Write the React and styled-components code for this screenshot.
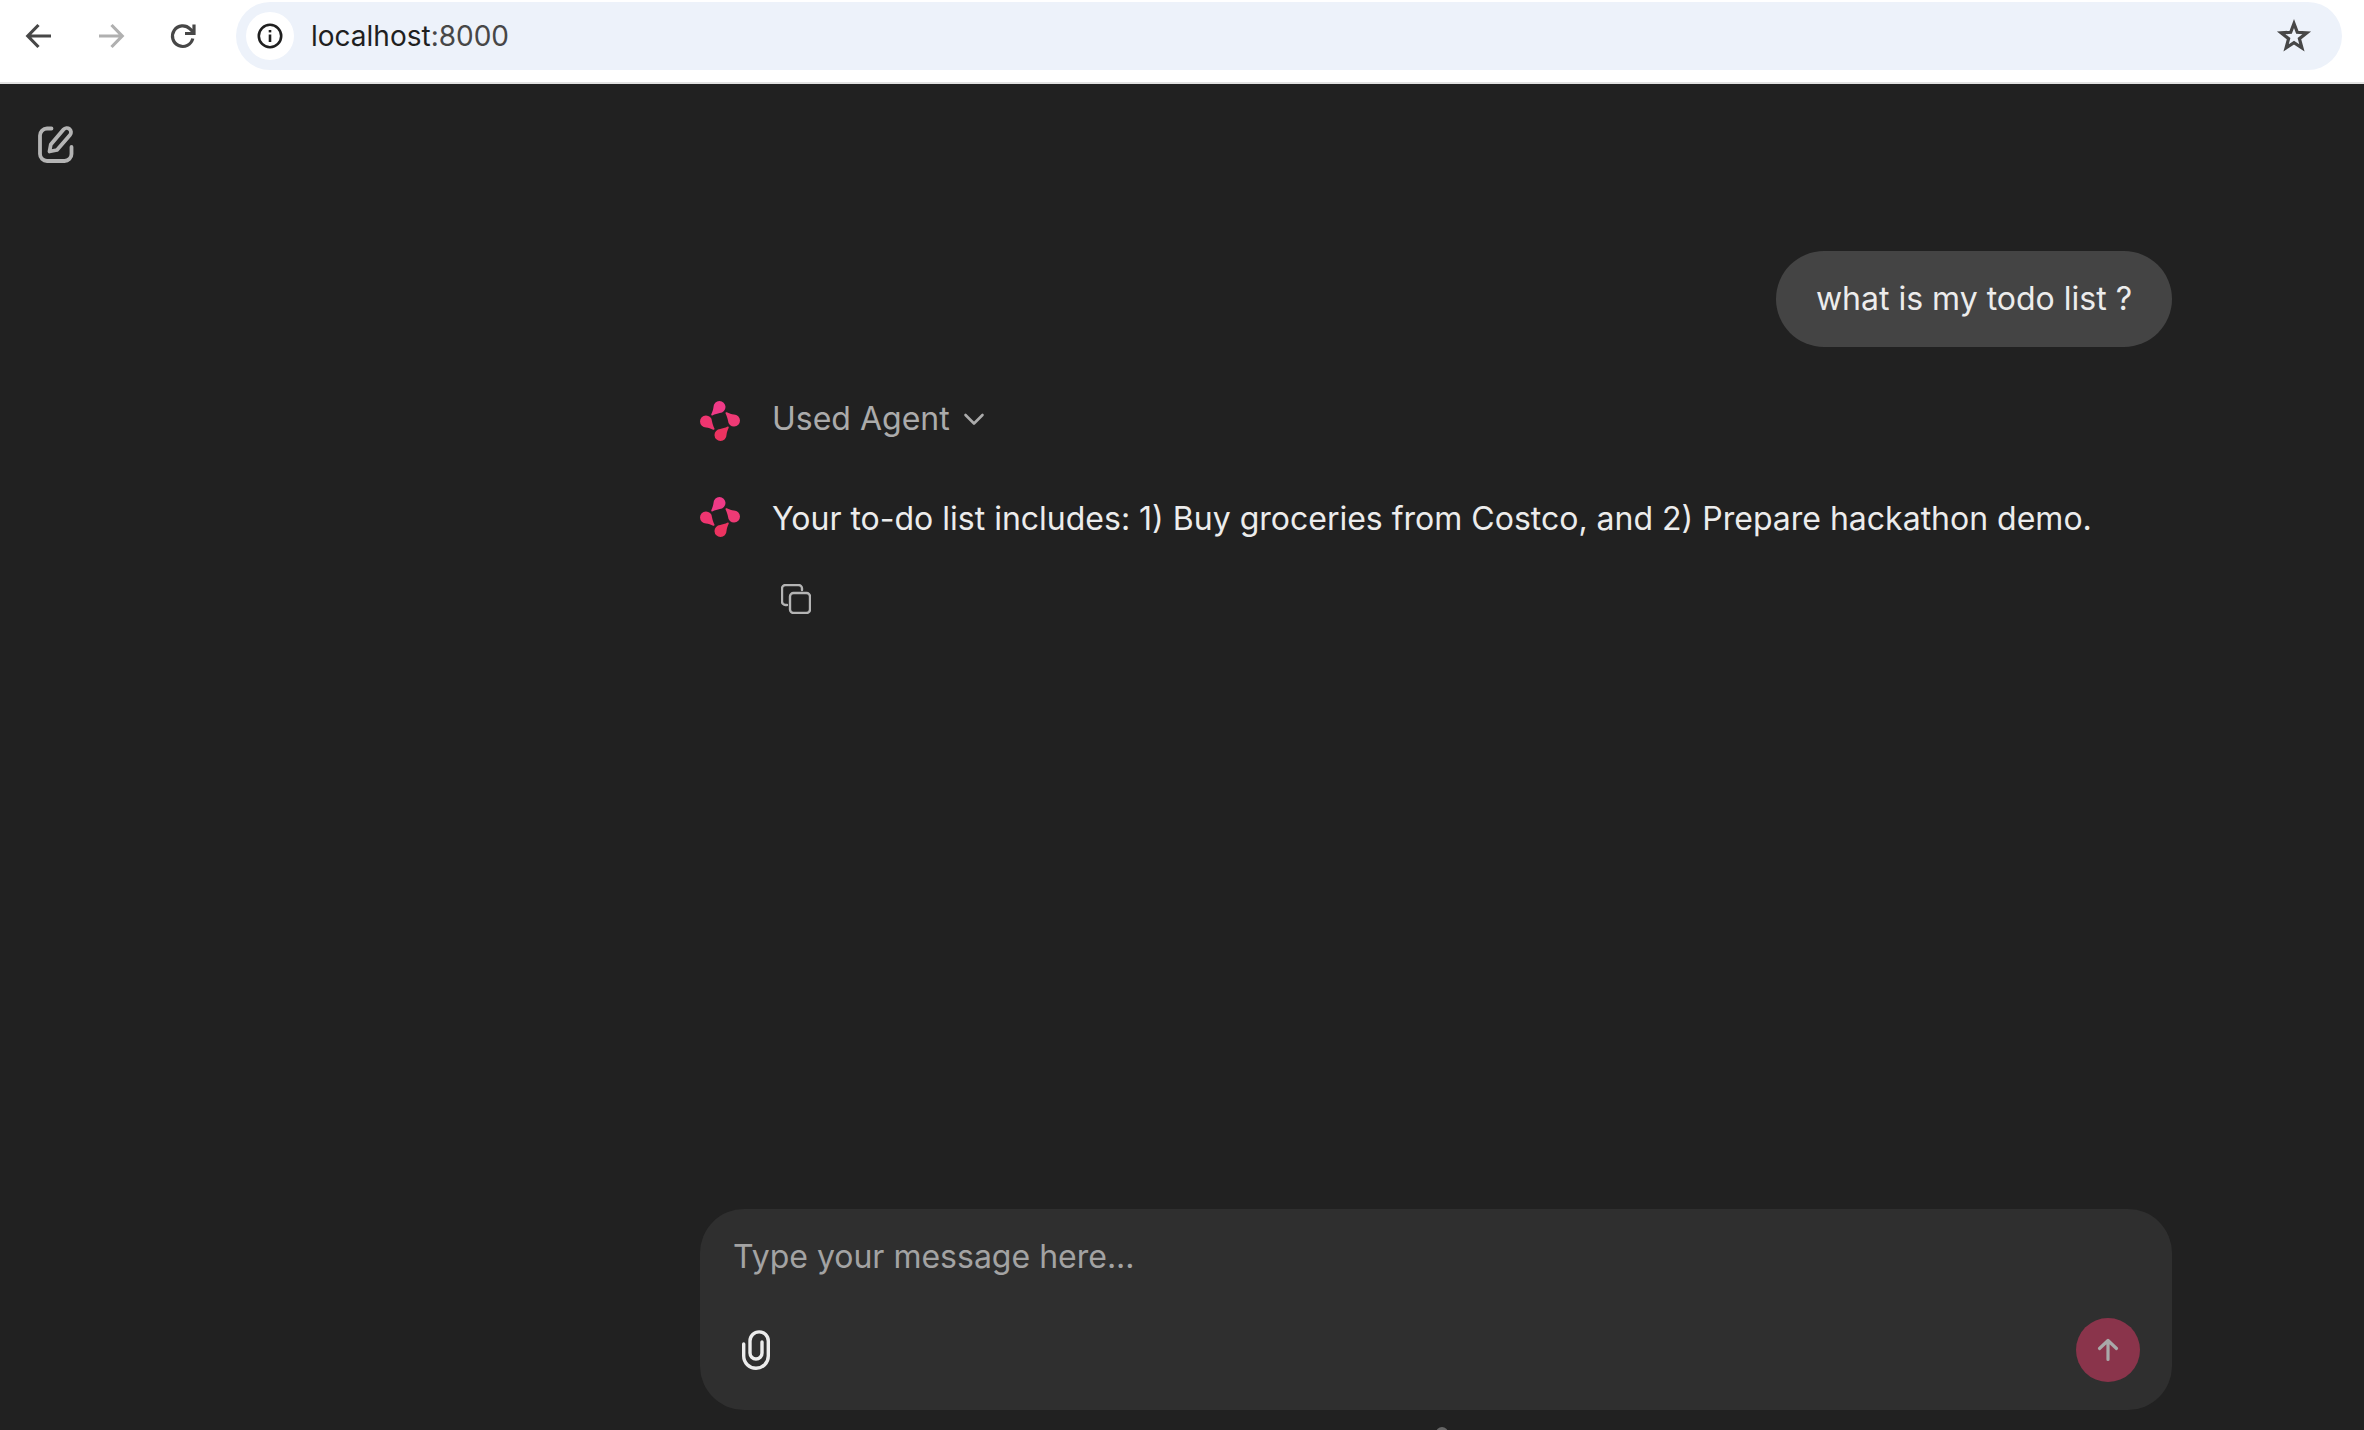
import React from "react";
import styled, { createGlobalStyle } from "styled-components";

const Global = createGlobalStyle`
  html, body { margin: 0; padding: 0; height: 100%; background: #212121; }
  #root { height: 100%; }
  * { box-sizing: border-box; }
`;

const Page = styled.div`
  position: relative;
  height: 1430px;
  display: flex;
  flex-direction: column;
  overflow: hidden;
  background: #212121;
  font-family: Inter, "Liberation Sans", sans-serif;
`;

const BrowserBar = styled.header`
  flex: none;
  height: 84px;
  padding: 2px 22px 12px 0;
  display: flex;
  align-items: stretch;
  background: #fff;
  border-bottom: 2px solid #e2e2e2;
`;

const NavButtons = styled.div`
  width: 236px;
  flex: none;
  padding-left: 21px;
  display: flex;
  align-items: center;
  gap: 36px;
`;

const NavIcon = styled.svg`
  width: 36px;
  height: 36px;
  flex: none;
  fill: none;
  stroke: ${(p) => p.$color};
  stroke-width: 3.2;
`;

const Omnibox = styled.div`
  flex: 1;
  display: flex;
  align-items: center;
  padding: 0 30px 0 10px;
  border-radius: 34px;
  background: #edf2fa;
`;

const InfoChip = styled.div`
  width: 48px;
  height: 48px;
  border-radius: 24px;
  background: #fff;
  display: flex;
  align-items: center;
  justify-content: center;
  margin-right: 17px;
`;

const Url = styled.div`
  flex: 1;
  font-size: 28px;
  color: #1f1f1f;
  span { color: #474747; }
`;

const Workspace = styled.main`
  flex: 1;
  min-height: 0;
  display: flex;
`;

const Sidebar = styled.aside`
  width: 700px;
  flex: none;
  padding: 41px 0 0 38px;
`;

const Chat = styled.section`
  width: 1472px;
  flex: none;
  display: flex;
  flex-direction: column;
  padding-top: 167px;
`;

const UserBubble = styled.div`
  align-self: flex-end;
  height: 96px;
  padding: 0 40px 2px;
  display: flex;
  align-items: center;
  border-radius: 48px;
  background: #444;
  color: #ececec;
  font-size: 32px;
`;

const AgentRow = styled.div`
  display: flex;
  align-items: center;
  gap: 32px;
  height: 40px;
  margin-top: ${(p) => p.$top}px;
  color: ${(p) => p.$color};
  font-size: 32px;
  white-space: nowrap;
`;

const AgentLabel = styled.div`
  display: flex;
  align-items: center;
  gap: 13px;
  margin-bottom: 5px;
`;

const AgentMessage = styled.span`
  margin-top: 3px;
`;

const CopyButton = styled.div`
  margin: 47px 0 0 81px;
  width: 30px;
  height: 30px;
  display: flex;
`;

const Composer = styled.div`
  margin-top: auto;
  margin-bottom: 20px;
  height: 201px;
  border-radius: 44px;
  background: #2f2f2f;
  padding: 27px 32px 28px 33px;
  display: flex;
  flex-direction: column;
  justify-content: space-between;
`;

const MessageInput = styled.input`
  width: 100%;
  height: 40px;
  padding: 0;
  border: 0;
  outline: 0;
  background: transparent;
  color: #ececec;
  font: 400 32px Inter, sans-serif;
  &::placeholder { color: #a3a3a3; opacity: 1; }
`;

const ComposerActions = styled.div`
  display: flex;
  align-items: center;
  justify-content: space-between;
`;

const AttachIcon = styled.svg`
  width: 28px;
  height: 40px;
  margin-left: 9px;
  fill: none;
  stroke: #ececec;
  stroke-width: 3.4;
  stroke-linecap: round;
`;

const SendButton = styled.div`
  width: 64px;
  height: 64px;
  border-radius: 50%;
  background: #8a344b;
  display: flex;
  align-items: center;
  justify-content: center;
`;

const PeekDot = styled.div`
  position: absolute;
  left: 1436px;
  top: 1427px;
  width: 12px;
  height: 12px;
  border-radius: 50%;
  background: #666;
`;

const DROP = "M11.300 13.200C12.400 10.800 13.200 8.600 13.500 6A6 6 0 1 1 19.800 12C17.500 12.400 15 13.200 12.300 14.500C11.700 14.800 11 13.900 11.300 13.200Z";

const Logo = () => (
  <svg width="40" height="40" viewBox="0 0 40 40" style={{ flex: "none" }}>
    <path d={DROP} fill="#ef3a87" />
    <path d={DROP} fill="#ee3a75" transform="rotate(90 20 20)" />
    <path d={DROP} fill="#ec3360" transform="rotate(180 20 20)" />
    <path d={DROP} fill="#ee3570" transform="rotate(270 20 20)" />
  </svg>
);

export default function App() {
  return (
    <Page>
      <Global />
      <BrowserBar>
        <NavButtons>
          <NavIcon viewBox="0 0 36 36" $color="#474747">
            <path d="M30 18H7M17.5 7 6.8 18l10.7 11" />
          </NavIcon>
          <NavIcon viewBox="0 0 36 36" $color="#b0b0b0">
            <path d="M6 18h23M18.5 7 29.2 18 18.500 29" />
          </NavIcon>
          <NavIcon viewBox="0 0 36 36" $color="#474747">
            <path d="M27.800 20.500A10.300 10.300 0 1 1 25 10.800L28.800 14.500" />
            <path d="M29 6.500V15.500H20" />
          </NavIcon>
        </NavButtons>
        <Omnibox>
          <InfoChip>
            <svg width="26" height="26" viewBox="0 0 26 26" fill="none" stroke="#1f1f1f" strokeWidth="2.600">
              <circle cx="13" cy="13" r="11.200" />
              <path d="M13 11.500V19" />
              <path d="M13 7V9.400" />
            </svg>
          </InfoChip>
          <Url>localhost<span>:8000</span></Url>
          <svg width="36" height="36" viewBox="0 0 36 36" fill="none" stroke="#474747" strokeWidth="3.200" strokeLinejoin="miter">
            <path d="M18 5.500 21.300 14.300 30.800 14.800 23.400 20.700 25.900 29.800 18 24.600 10.100 29.800 12.600 20.700 5.200 14.800 14.700 14.300Z" />
          </svg>
        </Omnibox>
      </BrowserBar>
      <Workspace>
        <Sidebar>
          <svg width="36" height="38" viewBox="0 0 36 38" fill="none" stroke="#b4b4b4" strokeWidth="3.800" strokeLinecap="round" strokeLinejoin="round">
            <path d="M13.500 3.500H9A7 7 0 0 0 2 10.500V29A7 7 0 0 0 9 36H26.500A7 7 0 0 0 33.500 29V22" />
            <path d="M11.500 26.500 12.800 19.500 25.500 4.500C27 2.800 29.800 2.500 31.500 4C33.300 5.500 33.500 8.300 32 10L19 25 11.500 26.500Z" />
          </svg>
        </Sidebar>
        <Chat>
          <UserBubble>what is my todo list ?</UserBubble>
          <AgentRow $top={54} $color="#ababab">
            <Logo />
            <AgentLabel>
              Used Agent
              <svg width="22" height="14" viewBox="0 0 22 14" fill="none" stroke="#ababab" strokeWidth="2.600" strokeLinecap="round" strokeLinejoin="round">
                <path d="M2.500 3 11 11.500 19.500 3" />
              </svg>
            </AgentLabel>
          </AgentRow>
          <AgentRow $top={56} $color="#ececec">
            <Logo />
            <AgentMessage>Your to-do list includes: 1) Buy groceries from Costco, and 2) Prepare hackathon demo.</AgentMessage>
          </AgentRow>
          <CopyButton>
            <svg width="30" height="30" viewBox="0 0 30 30" fill="none" stroke="#b4b4b4" strokeWidth="2.400" strokeLinecap="round" strokeLinejoin="round">
              <rect x="9" y="9" width="20" height="20" rx="3.500" />
              <path d="M6 21H4.500A3.500 3.500 0 0 1 1 17.500V4.500A3.500 3.500 0 0 1 4.500 1H17.500A3.500 3.500 0 0 1 21 4.500V6" />
            </svg>
          </CopyButton>
          <Composer>
            <MessageInput placeholder="Type your message here..." />
            <ComposerActions>
              <AttachIcon viewBox="0 0 28 40">
                <path d="M1.700 14V26A12.300 12.300 0 0 0 26.300 26V11A9.150 9.150 0 0 0 8 11V23A6 6 0 0 0 20 23V12" />
              </AttachIcon>
              <SendButton>
                <svg width="22" height="24" viewBox="0 0 22 24" fill="none" stroke="#a9a9a9" strokeWidth="3.200" strokeLinecap="round" strokeLinejoin="round">
                  <path d="M11 21.500V3M2.500 10.500 11 2.500 19.500 10.500" />
                </svg>
              </SendButton>
            </ComposerActions>
          </Composer>
        </Chat>
      </Workspace>
      <PeekDot />
    </Page>
  );
}
